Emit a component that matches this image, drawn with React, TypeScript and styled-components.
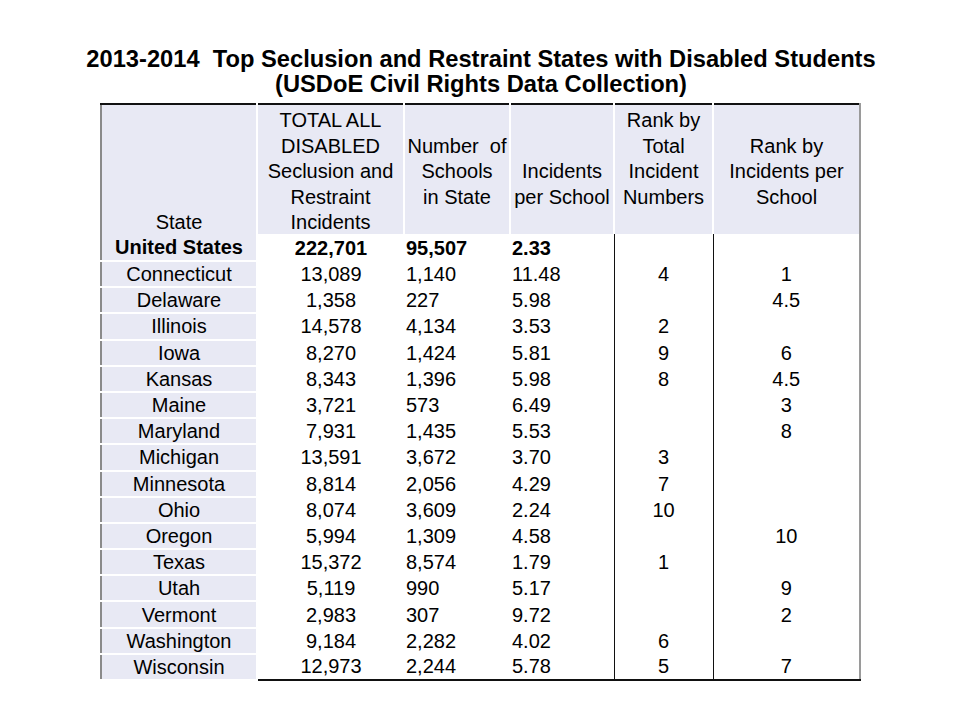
import React from "react";
import styled, { createGlobalStyle } from "styled-components";

const Global = createGlobalStyle`
  html, body { margin: 0; padding: 0; background: #ffffff; }
  body { font-family: "Liberation Sans", Arial, sans-serif; color: #000; }
  table { font-family: "Liberation Sans", Arial, sans-serif; }
`;

const Page = styled.div`
  width: 960px;
  height: 720px;
  display: flex;
  flex-direction: column;
  align-items: flex-start;
  padding-top: 47px;
  box-sizing: border-box;
  font-family: "Liberation Sans", Arial, sans-serif;
`;

const Title = styled.h1`
  align-self: stretch;
  margin: 0 0 7px 0;
  padding-left: 2px;
  font-family: "Liberation Sans", Arial, sans-serif;
  font-weight: 700;
  font-size: 23.7px;
  line-height: 24.5px;
  text-align: center;
  white-space: pre;
`;

const Table = styled.table`
  margin-left: 100px;
  width: 759px;
  border-collapse: collapse;
  table-layout: fixed;
  font-family: "Liberation Sans", Arial, sans-serif;
  font-size: 20px;
  color: #000;
  border-top: 2px solid #111;
  border-bottom: 2px solid #111;
  border-left: 2px solid #8a8a8a;
  border-right: 2px solid #9a9a9a;
`;

const HeadCell = styled.th<{ $pt: number }>`
  background: #e8e9f4;
  font-weight: 400;
  text-align: center;
  vertical-align: top;
  padding: ${(p) => p.$pt}px 0 0 0;
  height: 130px;
  box-sizing: border-box;
  border-right: 2px solid #ffffff;
  &:last-child { border-right: none; }
`;

const HeadText = styled.div`
  line-height: 25.5px;
  margin-bottom: -6px;
`;

const Row = styled.tr<{ $bold?: boolean }>`
  height: ${(p) => (p.$bold ? 27 : 26.2)}px;
  font-weight: ${(p) => (p.$bold ? 700 : 400)};
`;

const Cell = styled.td<{ $align: "left" | "center"; $state?: boolean; $rule?: boolean }>`
  padding: 0 0 0 ${(p) => (p.$align === "left" ? 2 : 0)}px;
  text-align: ${(p) => p.$align};
  line-height: 24px;
  white-space: nowrap;
  background: ${(p) => (p.$state ? "#e8e9f4" : "#ffffff")};
  border-bottom: ${(p) => (p.$state ? "2px solid #ffffff" : "none")};
  border-right: ${(p) => (p.$state ? "2px solid #ffffff" : "none")};
  border-left: ${(p) => (p.$rule ? "1.5px solid #111" : "none")};
`;

type R = [string, string, string, string, string, string];

const rows: R[] = [
  ["United States", "222,701", "95,507", "2.33", "", ""],
  ["Connecticut", "13,089", "1,140", "11.48", "4", "1"],
  ["Delaware", "1,358", "227", "5.98", "", "4.5"],
  ["Illinois", "14,578", "4,134", "3.53", "2", ""],
  ["Iowa", "8,270", "1,424", "5.81", "9", "6"],
  ["Kansas", "8,343", "1,396", "5.98", "8", "4.5"],
  ["Maine", "3,721", "573", "6.49", "", "3"],
  ["Maryland", "7,931", "1,435", "5.53", "", "8"],
  ["Michigan", "13,591", "3,672", "3.70", "3", ""],
  ["Minnesota", "8,814", "2,056", "4.29", "7", ""],
  ["Ohio", "8,074", "3,609", "2.24", "10", ""],
  ["Oregon", "5,994", "1,309", "4.58", "", "10"],
  ["Texas", "15,372", "8,574", "1.79", "1", ""],
  ["Utah", "5,119", "990", "5.17", "", "9"],
  ["Vermont", "2,983", "307", "9.72", "", "2"],
  ["Washington", "9,184", "2,282", "4.02", "6", ""],
  ["Wisconsin", "12,973", "2,244", "5.78", "5", "7"],
];

const widths = [156, 147, 106, 104, 99, 147];

export default function App() {
  return (
    <Page>
      <Global />
      <Title>{"2013-2014  Top Seclusion and Restraint States with Disabled Students\n(USDoE Civil Rights Data Collection)"}</Title>
      <Table>
        <colgroup>
          {widths.map((w, i) => (
            <col key={i} style={{ width: w }} />
          ))}
        </colgroup>
        <thead>
          <tr>
            <HeadCell $pt={105}>
              <HeadText>State</HeadText>
            </HeadCell>
            <HeadCell $pt={3}>
              <HeadText>
                TOTAL ALL<br />DISABLED<br />Seclusion and<br />Restraint<br />Incidents
              </HeadText>
            </HeadCell>
            <HeadCell $pt={28.5}>
              <HeadText>
                Number&nbsp; of<br />Schools<br />in State
              </HeadText>
            </HeadCell>
            <HeadCell $pt={54}>
              <HeadText>
                Incidents<br />per School
              </HeadText>
            </HeadCell>
            <HeadCell $pt={3}>
              <HeadText>
                Rank by<br />Total<br />Incident<br />Numbers
              </HeadText>
            </HeadCell>
            <HeadCell $pt={28.5}>
              <HeadText>
                Rank by<br />Incidents per<br />School
              </HeadText>
            </HeadCell>
          </tr>
        </thead>
        <tbody>
          {rows.map((r, i) => (
            <Row key={r[0]} $bold={i === 0}>
              <Cell $align="center" $state>{r[0]}</Cell>
              <Cell $align="center">{r[1]}</Cell>
              <Cell $align="left">{r[2]}</Cell>
              <Cell $align="left">{r[3]}</Cell>
              <Cell $align="center" $rule>{r[4]}</Cell>
              <Cell $align="center" $rule>{r[5]}</Cell>
            </Row>
          ))}
        </tbody>
      </Table>
    </Page>
  );
}
